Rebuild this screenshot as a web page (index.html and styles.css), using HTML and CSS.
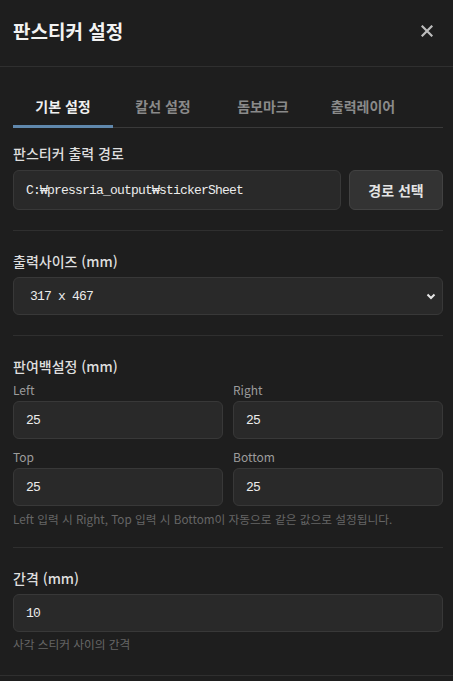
FILE: index.html
```html
<!DOCTYPE html>
<html lang="ko">
<head>
<meta charset="utf-8">
<title>판스티커 설정</title>
<link rel="stylesheet" href="styles.css">
</head>
<body>
<div class="modal">
  <header class="modal-header">
    <h1 class="modal-title">판스티커 설정</h1>
    <button class="close-btn" aria-label="닫기">
      <svg width="12" height="12" viewBox="0 0 12 12"><path d="M1.5 1.5 L10.5 10.5 M10.5 1.5 L1.5 10.5" stroke="#bdbdbd" stroke-width="2.2" stroke-linecap="square"/></svg>
    </button>
  </header>
  <div class="modal-body">
    <nav class="tabs">
      <div class="tab active">기본 설정</div>
      <div class="tab">칼선 설정</div>
      <div class="tab">돔보마크</div>
      <div class="tab">출력레이어</div>
    </nav>

    <section class="section first">
      <div class="label">판스티커 출력 경로</div>
      <div class="path-row">
        <input class="field path-input" type="text" value="C:₩pressria_output₩stickerSheet" readonly>
        <button class="btn">경로 선택</button>
      </div>
    </section>

    <section class="section">
      <div class="label">출력사이즈 (mm)</div>
      <div class="select-wrap">
        <select class="field select">
          <option>317 x 467</option>
        </select>
        <svg class="chevron" width="10" height="7" viewBox="0 0 10 7"><path d="M1.5 1.5 L5 5 L8.5 1.5" fill="none" stroke="#e6e6e6" stroke-width="2"/></svg>
      </div>
    </section>

    <section class="section">
      <div class="label">판여백설정 (mm)</div>
      <div class="grid">
        <div class="cell">
          <div class="sublabel">Left</div>
          <input class="field" type="text" value="25">
        </div>
        <div class="cell">
          <div class="sublabel">Right</div>
          <input class="field" type="text" value="25">
        </div>
        <div class="cell">
          <div class="sublabel">Top</div>
          <input class="field" type="text" value="25">
        </div>
        <div class="cell">
          <div class="sublabel">Bottom</div>
          <input class="field" type="text" value="25">
        </div>
      </div>
      <div class="help">Left 입력 시 Right, Top 입력 시 Bottom이 자동으로 같은 값으로 설정됩니다.</div>
    </section>

    <section class="section last">
      <div class="label">간격 (mm)</div>
      <input class="field" type="text" value="10">
      <div class="help help-gap">사각 스티커 사이의 간격</div>
    </section>
  </div>
  <footer class="modal-footer"></footer>
</div>
</body>
</html>
```
FILE: styles.css
```css
* { box-sizing: border-box; }
html, body {
  margin: 0;
  padding: 0;
  background: #1e1e1e;
}
body {
  font-family: "Noto Sans CJK KR", "Noto Sans", sans-serif;
  color: #dcdcdc;
}
.modal {
  width: 453px;
  min-height: 681px;
  background: #1e1e1e;
}
.modal-header {
  height: 67px;
  border-bottom: 1px solid #2f2f2f;
  display: flex;
  align-items: center;
  justify-content: space-between;
  padding: 0 20px 4px 13px;
}
.modal-title {
  margin: 0;
  font-size: 19px;
  font-weight: 700;
  color: #f2f2f2;
  line-height: 24px;
}
.close-btn {
  background: none;
  border: 0;
  padding: 0;
  width: 12px;
  height: 12px;
  display: flex;
}
.modal-body {
  padding: 21px 10px 0 13px;
}
.tabs {
  display: flex;
  border-bottom: 1px solid #3a3a3a;
}
.tab {
  width: 100px;
  height: 40px;
  border-bottom: 3px solid transparent;
  margin-bottom: -1px;
  display: flex;
  align-items: center;
  justify-content: center;
  font-size: 14px;
  font-weight: 700;
  color: #8a8a8a;
  padding-bottom: 2px;
}
.tab.active {
  color: #f0f0f0;
  border-bottom-color: #6088ad;
}
.section {
  padding: 20px 0;
  border-bottom: 1px solid #2f2f2f;
}
.section.first { padding-top: 15px; }
.section.last { border-bottom: 0; padding-bottom: 23px; }
.label {
  font-size: 14px;
  line-height: 20px;
  font-weight: 500;
  color: #dedede;
  margin-bottom: 6px;
}
.section.first .label { margin-bottom: 7px; }
.field {
  display: block;
  width: 100%;
  height: 38px;
  background: #292929;
  border: 1px solid #383838;
  border-radius: 6px;
  color: #ececec;
  font-family: "Liberation Mono", "DejaVu Sans Mono", monospace;
  font-size: 13px;
  letter-spacing: -0.8px;
  padding: 0 12px;
  outline: none;
}
.path-row {
  display: flex;
  gap: 8px;
}
.path-input {
  flex: 1;
  height: 40px;
}
.btn {
  width: 94px;
  height: 40px;
  flex: none;
  background: #333333;
  border: 1px solid #424242;
  border-radius: 6px;
  color: #e4e4e4;
  font-family: "Noto Sans CJK KR", sans-serif;
  font-size: 14px;
  font-weight: 700;
  padding: 0;
}
.select-wrap {
  position: relative;
}
.select {
  appearance: none;
  -webkit-appearance: none;
  padding-left: 16px;
}
.chevron {
  position: absolute;
  right: 7px;
  top: 16px;
  pointer-events: none;
}
.grid {
  display: grid;
  grid-template-columns: 1fr 1fr;
  column-gap: 10px;
  row-gap: 10px;
  margin-top: 6px;
}
.sublabel {
  font-size: 12px;
  line-height: 16px;
  color: #9c9c9c;
  margin-bottom: 3px;
}
.help {
  font-size: 11.7px;
  line-height: 16px;
  color: #666666;
  margin-top: 5px;
}
.help-gap { margin-top: 4px; }
.modal-footer {
  border-top: 1px solid #2f2f2f;
  height: 7px;
}
```
